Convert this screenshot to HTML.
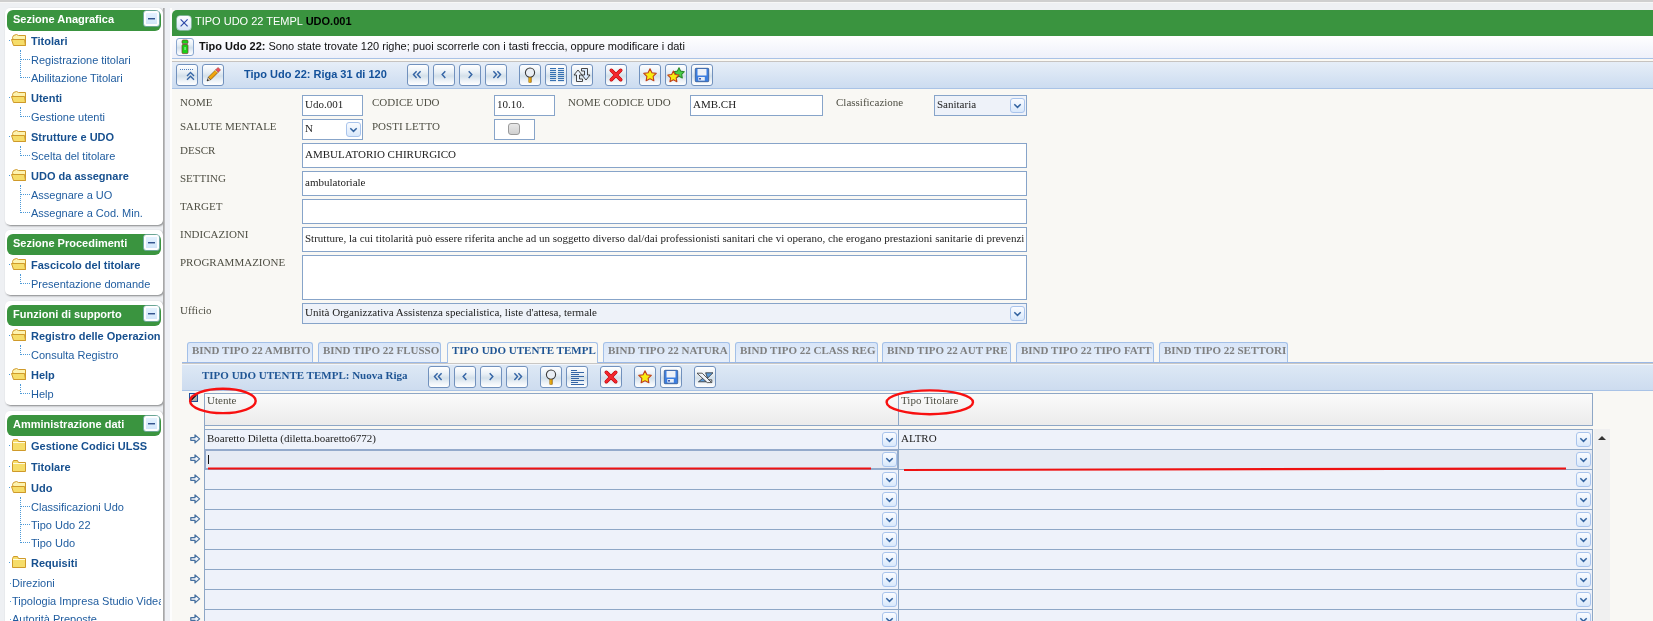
<!DOCTYPE html><html><head><meta charset="utf-8"><style>
*{margin:0;padding:0;box-sizing:border-box}
html,body{width:1653px;height:621px;overflow:hidden}
body{position:relative;background:#eef0f3;font-family:"Liberation Sans",sans-serif;font-size:11px}
.abs{position:absolute}
.topbar{left:0;top:0;width:1653px;height:2px;background:#cfcfcf}
.topw{left:0;top:2px;width:1653px;height:1px;background:#f7f7f7}
.pnl{position:absolute;left:5px;width:158px;background:#fff;border-radius:5px;box-shadow:1px 1px 2px rgba(0,0,0,.45)}
.ph{position:absolute;left:7px;width:154px;height:21px;background:#3a943f;border-radius:6px;color:#fff;font-weight:bold;font-size:11px}
.ph span{position:absolute;left:6px;top:3px;line-height:13px}
.mb{position:absolute;left:137px;top:1px;width:15px;height:15px;border-radius:2px;background:linear-gradient(#e4f2ff,#d2e6fa);border:2px solid #fdfdff;box-shadow:0 0 0 .6px #9ab8e8}
.mb:after{content:"";position:absolute;left:2px;top:5px;width:7px;height:1px;background:#33548f;box-shadow:0 1px 0 rgba(51,84,143,.45)}
.it{position:absolute;white-space:nowrap;color:#1f5c9f;line-height:13px}
.itb{position:absolute;white-space:nowrap;color:#17508f;font-weight:bold;line-height:13px}
.fo{position:absolute}
.vd{position:absolute;border-left:1px dotted #4d9ad8;width:0}
.hd{position:absolute;border-top:1px dotted #4d9ad8;height:0}
.dot{position:absolute;width:1px;height:1px;background:#4d9ad8}
</style></head><body><div style="position:absolute;left:0;top:0;width:1653px;height:621px;overflow:hidden;will-change:transform">
<div class="abs topbar"></div><div class="abs topw"></div>
<div style="position:absolute;left:0;top:0;width:163px;height:621px;overflow:hidden">
<div class="pnl" style="top:8px;height:217px"></div>
<div class="ph" style="top:10px"><span>Sezione Anagrafica</span><div class="mb"></div></div>
<div class="fo" style="left:11px;top:34px"><svg width="16" height="13" viewBox="0 0 16 13"><path d="M1.5 3.5 L2.5 1.5 L5.5 0.5 L7.5 1.5 L14.5 1.5 L14.5 11.5 L3.5 11.5 Z" fill="#fdf3b0" stroke="#cf9a2a" stroke-width="1"/><path d="M0.5 5.5 L13.5 5.5 L14.5 11.5 L2.5 11.5 Z" fill="#f6dd6a" stroke="#cf9a2a" stroke-width="1"/></svg></div>
<div class="dot" style="left:9px;top:40px"></div>
<div class="itb" style="left:31px;top:35px">Titolari</div>
<div class="it" style="left:31px;top:54px">Registrazione titolari</div>
<div class="hd" style="left:21px;top:59px;width:9px"></div>
<div class="vd" style="left:20px;top:50px;height:10px"></div>
<div class="it" style="left:31px;top:72px">Abilitazione Titolari</div>
<div class="hd" style="left:21px;top:77px;width:9px"></div>
<div class="vd" style="left:20px;top:50px;height:28px"></div>
<div class="fo" style="left:11px;top:91px"><svg width="16" height="13" viewBox="0 0 16 13"><path d="M1.5 3.5 L2.5 1.5 L5.5 0.5 L7.5 1.5 L14.5 1.5 L14.5 11.5 L3.5 11.5 Z" fill="#fdf3b0" stroke="#cf9a2a" stroke-width="1"/><path d="M0.5 5.5 L13.5 5.5 L14.5 11.5 L2.5 11.5 Z" fill="#f6dd6a" stroke="#cf9a2a" stroke-width="1"/></svg></div>
<div class="dot" style="left:9px;top:97px"></div>
<div class="itb" style="left:31px;top:92px">Utenti</div>
<div class="it" style="left:31px;top:111px">Gestione utenti</div>
<div class="hd" style="left:21px;top:116px;width:9px"></div>
<div class="vd" style="left:20px;top:107px;height:10px"></div>
<div class="fo" style="left:11px;top:130px"><svg width="16" height="13" viewBox="0 0 16 13"><path d="M1.5 3.5 L2.5 1.5 L5.5 0.5 L7.5 1.5 L14.5 1.5 L14.5 11.5 L3.5 11.5 Z" fill="#fdf3b0" stroke="#cf9a2a" stroke-width="1"/><path d="M0.5 5.5 L13.5 5.5 L14.5 11.5 L2.5 11.5 Z" fill="#f6dd6a" stroke="#cf9a2a" stroke-width="1"/></svg></div>
<div class="dot" style="left:9px;top:136px"></div>
<div class="itb" style="left:31px;top:131px">Strutture e UDO</div>
<div class="it" style="left:31px;top:150px">Scelta del titolare</div>
<div class="hd" style="left:21px;top:155px;width:9px"></div>
<div class="vd" style="left:20px;top:146px;height:10px"></div>
<div class="fo" style="left:11px;top:169px"><svg width="16" height="13" viewBox="0 0 16 13"><path d="M1.5 3.5 L2.5 1.5 L5.5 0.5 L7.5 1.5 L14.5 1.5 L14.5 11.5 L3.5 11.5 Z" fill="#fdf3b0" stroke="#cf9a2a" stroke-width="1"/><path d="M0.5 5.5 L13.5 5.5 L14.5 11.5 L2.5 11.5 Z" fill="#f6dd6a" stroke="#cf9a2a" stroke-width="1"/></svg></div>
<div class="dot" style="left:9px;top:175px"></div>
<div class="itb" style="left:31px;top:170px">UDO da assegnare</div>
<div class="it" style="left:31px;top:189px">Assegnare a UO</div>
<div class="hd" style="left:21px;top:194px;width:9px"></div>
<div class="vd" style="left:20px;top:185px;height:10px"></div>
<div class="it" style="left:31px;top:207px">Assegnare a Cod. Min.</div>
<div class="hd" style="left:21px;top:212px;width:9px"></div>
<div class="vd" style="left:20px;top:185px;height:28px"></div>
<div class="pnl" style="top:230px;height:65px"></div>
<div class="ph" style="top:234px"><span>Sezione Procedimenti</span><div class="mb"></div></div>
<div class="fo" style="left:11px;top:258px"><svg width="16" height="13" viewBox="0 0 16 13"><path d="M1.5 3.5 L2.5 1.5 L5.5 0.5 L7.5 1.5 L14.5 1.5 L14.5 11.5 L3.5 11.5 Z" fill="#fdf3b0" stroke="#cf9a2a" stroke-width="1"/><path d="M0.5 5.5 L13.5 5.5 L14.5 11.5 L2.5 11.5 Z" fill="#f6dd6a" stroke="#cf9a2a" stroke-width="1"/></svg></div>
<div class="dot" style="left:9px;top:264px"></div>
<div class="itb" style="left:31px;top:259px">Fascicolo del titolare</div>
<div class="it" style="left:31px;top:278px">Presentazione domande</div>
<div class="hd" style="left:21px;top:283px;width:9px"></div>
<div class="vd" style="left:20px;top:274px;height:10px"></div>
<div class="pnl" style="top:301px;height:104px"></div>
<div class="ph" style="top:305px"><span>Funzioni di supporto</span><div class="mb"></div></div>
<div class="fo" style="left:11px;top:329px"><svg width="16" height="13" viewBox="0 0 16 13"><path d="M1.5 3.5 L2.5 1.5 L5.5 0.5 L7.5 1.5 L14.5 1.5 L14.5 11.5 L3.5 11.5 Z" fill="#fdf3b0" stroke="#cf9a2a" stroke-width="1"/><path d="M0.5 5.5 L13.5 5.5 L14.5 11.5 L2.5 11.5 Z" fill="#f6dd6a" stroke="#cf9a2a" stroke-width="1"/></svg></div>
<div class="dot" style="left:9px;top:335px"></div>
<div class="itb" style="left:31px;top:330px"><span style="display:inline-block;width:130px;overflow:hidden;vertical-align:top">Registro delle Operazioni</span></div>
<div class="it" style="left:31px;top:349px">Consulta Registro</div>
<div class="hd" style="left:21px;top:354px;width:9px"></div>
<div class="vd" style="left:20px;top:345px;height:10px"></div>
<div class="fo" style="left:11px;top:368px"><svg width="16" height="13" viewBox="0 0 16 13"><path d="M1.5 3.5 L2.5 1.5 L5.5 0.5 L7.5 1.5 L14.5 1.5 L14.5 11.5 L3.5 11.5 Z" fill="#fdf3b0" stroke="#cf9a2a" stroke-width="1"/><path d="M0.5 5.5 L13.5 5.5 L14.5 11.5 L2.5 11.5 Z" fill="#f6dd6a" stroke="#cf9a2a" stroke-width="1"/></svg></div>
<div class="dot" style="left:9px;top:374px"></div>
<div class="itb" style="left:31px;top:369px">Help</div>
<div class="it" style="left:31px;top:388px">Help</div>
<div class="hd" style="left:21px;top:393px;width:9px"></div>
<div class="vd" style="left:20px;top:384px;height:10px"></div>
<div class="pnl" style="top:411px;height:229px"></div>
<div class="ph" style="top:415px"><span>Amministrazione dati</span><div class="mb"></div></div>
<div class="fo" style="left:11px;top:439px"><svg width="16" height="13" viewBox="0 0 16 13"><path d="M1.5 2.5 L2.5 0.5 L6.5 0.5 L7.5 2.5 L14.5 2.5 L14.5 11.5 L1.5 11.5 Z" fill="#f6dd6a" stroke="#cf9a2a" stroke-width="1"/><path d="M2 3.5 L14 3.5" stroke="#fffbe0" stroke-width="1"/></svg></div>
<div class="dot" style="left:9px;top:445px"></div>
<div class="itb" style="left:31px;top:440px">Gestione Codici ULSS</div>
<div class="fo" style="left:11px;top:460px"><svg width="16" height="13" viewBox="0 0 16 13"><path d="M1.5 2.5 L2.5 0.5 L6.5 0.5 L7.5 2.5 L14.5 2.5 L14.5 11.5 L1.5 11.5 Z" fill="#f6dd6a" stroke="#cf9a2a" stroke-width="1"/><path d="M2 3.5 L14 3.5" stroke="#fffbe0" stroke-width="1"/></svg></div>
<div class="dot" style="left:9px;top:466px"></div>
<div class="itb" style="left:31px;top:461px">Titolare</div>
<div class="fo" style="left:11px;top:481px"><svg width="16" height="13" viewBox="0 0 16 13"><path d="M1.5 3.5 L2.5 1.5 L5.5 0.5 L7.5 1.5 L14.5 1.5 L14.5 11.5 L3.5 11.5 Z" fill="#fdf3b0" stroke="#cf9a2a" stroke-width="1"/><path d="M0.5 5.5 L13.5 5.5 L14.5 11.5 L2.5 11.5 Z" fill="#f6dd6a" stroke="#cf9a2a" stroke-width="1"/></svg></div>
<div class="dot" style="left:9px;top:487px"></div>
<div class="itb" style="left:31px;top:482px">Udo</div>
<div class="it" style="left:31px;top:501px">Classificazioni Udo</div>
<div class="hd" style="left:21px;top:506px;width:9px"></div>
<div class="vd" style="left:20px;top:497px;height:10px"></div>
<div class="it" style="left:31px;top:519px">Tipo Udo 22</div>
<div class="hd" style="left:21px;top:524px;width:9px"></div>
<div class="vd" style="left:20px;top:497px;height:28px"></div>
<div class="it" style="left:31px;top:537px">Tipo Udo</div>
<div class="hd" style="left:21px;top:542px;width:9px"></div>
<div class="vd" style="left:20px;top:497px;height:46px"></div>
<div class="fo" style="left:11px;top:556px"><svg width="16" height="13" viewBox="0 0 16 13"><path d="M1.5 2.5 L2.5 0.5 L6.5 0.5 L7.5 2.5 L14.5 2.5 L14.5 11.5 L1.5 11.5 Z" fill="#f6dd6a" stroke="#cf9a2a" stroke-width="1"/><path d="M2 3.5 L14 3.5" stroke="#fffbe0" stroke-width="1"/></svg></div>
<div class="dot" style="left:9px;top:562px"></div>
<div class="itb" style="left:31px;top:557px">Requisiti</div>
<div class="it" style="left:12px;top:577px">Direzioni</div>
<div class="dot" style="left:10px;top:583px"></div>
<div class="it" style="left:12px;top:595px"><span style="display:inline-block;width:149px;overflow:hidden;vertical-align:top">Tipologia Impresa Studio Videat</span></div>
<div class="dot" style="left:10px;top:601px"></div>
<div class="it" style="left:12px;top:613px">Autorità Preposte</div>
<div class="dot" style="left:10px;top:619px"></div>
</div>

<style>
.mp{position:absolute;left:172px;top:10px;width:1481px;height:611px;background:#f9f8f4}
.gh{position:absolute;left:172px;top:10px;width:1481px;height:26px;background:#3a943f;border-top-left-radius:5px}
.ghs{position:absolute;left:195px;top:15px;color:#fff;line-height:13px;white-space:nowrap}
.ghs b{color:#000}
.xb{position:absolute;left:176.5px;top:15.5px;width:14px;height:14px;border-radius:3px;background:linear-gradient(#fdfdff,#e6eefa 60%,#d8e4f6);box-shadow:0 0 0 .5px #c8d8f0}
.info{position:absolute;left:172px;top:36px;width:1481px;height:22px;background:linear-gradient(#ffffff,#eef0fa)}
.infol{position:absolute;left:172px;top:58px;width:1481px;height:1px;background:#a9c2e6}
.infol2{position:absolute;left:172px;top:59px;width:1481px;height:2px;background:#fbf9f3}
.tbl{position:absolute;left:172px;top:61px;width:1481px;height:1px;background:#c6c3c0}
.tb{position:absolute;left:172px;top:62px;width:1481px;height:26px;background:linear-gradient(#e6eef8,#ccdcf0)}
.tbb{position:absolute;left:172px;top:88px;width:1481px;height:1px;background:#a9c3e6}
.btn{position:absolute;width:22px;height:22px;border:1px solid #7191bd;border-radius:3px;background:linear-gradient(#ffffff 0%,#e9f0f6 35%,#d3e0ea 55%,#eef3f8 80%,#ffffff 100%)}
.btn svg{position:absolute;left:0;top:0}
.ttl{position:absolute;color:#13519a;font-weight:bold;white-space:nowrap;line-height:13px}
.lbl{position:absolute;font-family:"Liberation Serif",serif;color:#4f4f44;white-space:nowrap;line-height:13px}
.inp{position:absolute;background:#fff;border:1px solid #87a4c9;font-family:"Liberation Serif",serif;color:#222;white-space:nowrap;overflow:hidden;line-height:13px}
.inp span{position:absolute;left:2px;right:2px;overflow:hidden}
.sel{background:#eef2f9}
.dd{position:absolute;width:15px;height:15px;border:1px solid #a9c4ec;border-radius:3px;background:linear-gradient(#fafcff,#d9e8fb)}
.dd svg{position:absolute;left:0;top:0}
</style>

<div class="abs" style="left:163px;top:8px;width:2px;height:613px;background:linear-gradient(90deg,#9c9c9c,#c9c9cc)"></div>
<div class="abs" style="left:165px;top:8px;width:5px;height:613px;background:#eef0f5"></div>
<div class="abs" style="left:170px;top:8px;width:2px;height:613px;background:#fdfdfd"></div>
<div class="mp"></div>
<div class="gh"></div>
<div class="xb"><svg width="14" height="14" viewBox="0 0 14 14"><path d="M3.6 3.4 L10.6 10.4 M10.6 3.4 L3.6 10.4" stroke="#2c48a8" stroke-width="1.15"/></svg></div>
<div class="ghs">TIPO UDO 22 TEMPL <b>UDO.001</b></div>
<div class="info"></div><div class="infol"></div><div class="infol2"></div><div class="tbl"></div>
<div class="btn" style="left:176px;top:38px;width:18px;height:18px;border-color:#8aa7cf"><svg width="16" height="16" viewBox="0 0 16 16"><rect x="5" y="1" width="6" height="3.6" rx="1.2" fill="#18d018" stroke="#7a3a2a" stroke-width=".7"/><rect x="5.4" y="4.6" width="5.2" height="1" fill="#8a7a70"/><rect x="5" y="5.6" width="6" height="9" rx="1" fill="#18d018" stroke="#7a3a2a" stroke-width=".7"/><rect x="7.6" y="8" width=".9" height="3" fill="#c8f8c8"/></svg></div>
<div class="abs" style="left:199px;top:40px;color:#111;line-height:13px;white-space:nowrap"><b>Tipo Udo 22:</b> Sono state trovate 120 righe; puoi scorrerle con i tasti freccia, oppure modificare i dati</div>
<div class="tb"></div><div class="tbb"></div>
<div class="btn" style="left:176px;top:64px;width:22px;height:22px"><svg width="20" height="20" viewBox="0 0 20 20"><rect x="3" y="4" width="1" height="1" fill="#4f7fbf"/><rect x="5" y="4" width="1" height="1" fill="#4f7fbf"/><rect x="7" y="4" width="1" height="1" fill="#4f7fbf"/><rect x="9" y="4" width="1" height="1" fill="#4f7fbf"/><rect x="11" y="4" width="1" height="1" fill="#4f7fbf"/><rect x="13" y="4" width="1" height="1" fill="#4f7fbf"/><rect x="15" y="4" width="1" height="1" fill="#4f7fbf"/><path d="M10 11 L13.5 7.5 L17 11 M10 14.8 L13.5 11.3 L17 14.8" fill="none" stroke="#3565a5" stroke-width="1.35"/></svg></div>
<div class="btn" style="left:202px;top:64px;width:22px;height:22px"><svg width="20" height="20" viewBox="0 0 20 20"><defs><linearGradient id="pg" x1="0" y1="0" x2="1" y2="1"><stop offset="0" stop-color="#ffd21a"/><stop offset="1" stop-color="#e07800"/></linearGradient></defs><path d="M5.26 12.26 L12.76 4.76 L15.24 7.24 L7.74 14.74 Z" fill="url(#pg)" stroke="#6a3a00" stroke-width=".6"/><path d="M12.76 4.76 L15.06 2.46 L17.54 4.94 L15.24 7.24 Z" fill="#f0505a" stroke="#8a2a2a" stroke-width=".5"/><path d="M12.4 5.1 L14.9 7.6" stroke="#ddd" stroke-width=".9"/><path d="M5.26 12.26 L7.74 14.74 L4 16 Z" fill="#f0d8b0" stroke="#333" stroke-width=".5"/><path d="M4 16 L4.7 14.1 L5.9 15.3 Z" fill="#111"/></svg></div>
<div class="ttl" style="left:244px;top:68px">Tipo Udo 22: Riga 31 di 120</div>
<div class="btn" style="left:407px;top:64px;width:22px;height:22px"><svg width="20" height="20" viewBox="0 0 20 20"><path d="M8.6 6.3 L5.5 9.6 L8.6 12.9 M12.6 6.3 L9.5 9.6 L12.6 12.9" fill="none" stroke="#3565a5" stroke-width="1.45"/></svg></div>
<div class="btn" style="left:433px;top:64px;width:22px;height:22px"><svg width="20" height="20" viewBox="0 0 20 20"><path d="M11.3 6.3 L8.2 9.6 L11.3 12.9" fill="none" stroke="#3565a5" stroke-width="1.45"/></svg></div>
<div class="btn" style="left:459px;top:64px;width:22px;height:22px"><svg width="20" height="20" viewBox="0 0 20 20"><path d="M8.7 6.3 L11.8 9.6 L8.7 12.9" fill="none" stroke="#3565a5" stroke-width="1.45"/></svg></div>
<div class="btn" style="left:485px;top:64px;width:22px;height:22px"><svg width="20" height="20" viewBox="0 0 20 20"><path d="M7.4 6.3 L10.5 9.6 L7.4 12.9 M11.4 6.3 L14.5 9.6 L11.4 12.9" fill="none" stroke="#3565a5" stroke-width="1.45"/></svg></div>
<div class="btn" style="left:519px;top:64px;width:22px;height:22px"><svg width="20" height="20" viewBox="0 0 20 20"><defs><linearGradient id="hg" x1="0" x2="1"><stop offset="0" stop-color="#f7c21a"/><stop offset="1" stop-color="#c98400"/></linearGradient></defs><circle cx="10" cy="7.6" r="4.6" fill="#e9eef4" stroke="#3a3a3a" stroke-width="1.1"/><rect x="8.8" y="12.4" width="2.5" height="5" fill="url(#hg)" stroke="#8a5a00" stroke-width=".5"/></svg></div>
<div class="btn" style="left:545px;top:64px;width:22px;height:22px"><svg width="20" height="20" viewBox="0 0 20 20"><rect x="4" y="3" width="6" height="1.1" fill="#3570b2"/><rect x="12" y="3" width="6" height="1.1" fill="#3570b2"/><rect x="4" y="5" width="6" height="1.1" fill="#3570b2"/><rect x="12" y="5" width="6" height="1.1" fill="#3570b2"/><rect x="4" y="7" width="6" height="1.1" fill="#3570b2"/><rect x="12" y="7" width="6" height="1.1" fill="#3570b2"/><rect x="4" y="9" width="6" height="1.1" fill="#3570b2"/><rect x="12" y="9" width="6" height="1.1" fill="#3570b2"/><rect x="4" y="11" width="6" height="1.1" fill="#3570b2"/><rect x="12" y="11" width="6" height="1.1" fill="#3570b2"/><rect x="4" y="13" width="6" height="1.1" fill="#3570b2"/><rect x="12" y="13" width="6" height="1.1" fill="#3570b2"/><rect x="4" y="15" width="6" height="1.1" fill="#3570b2"/><rect x="12" y="15" width="6" height="1.1" fill="#3570b2"/></svg></div>
<div class="btn" style="left:571px;top:64px;width:22px;height:22px"><svg width="20" height="20" viewBox="0 0 20 20"><path d="M2 10 L6 5 L10 10 L7.5 10 L7.5 14 L10.5 14 L10.5 16.5 L4.5 16.5 L4.5 10 Z" fill="#eef6ff" stroke="#333" stroke-width=".9" stroke-linejoin="round"/><path d="M18 10 L14 15 L10 10 L12.5 10 L12.5 6 L9.5 6 L9.5 3.5 L15.5 3.5 L15.5 10 Z" fill="#dcecff" stroke="#333" stroke-width=".9" stroke-linejoin="round"/></svg></div>
<div class="btn" style="left:605px;top:64px;width:22px;height:22px"><svg width="20" height="20" viewBox="0 0 20 20"><path d="M5.3 5.3 L14.7 14.7 M14.7 5.3 L5.3 14.7" stroke="#b80000" stroke-width="3.6" stroke-linecap="round"/><path d="M5.3 5.3 L14.7 14.7 M14.7 5.3 L5.3 14.7" stroke="#f3262e" stroke-width="2.6" stroke-linecap="round"/></svg></div>
<div class="btn" style="left:639px;top:64px;width:22px;height:22px"><svg width="20" height="20" viewBox="0 0 20 20"><polygon points="10.00,3.80 11.94,7.73 16.28,8.36 13.14,11.42 13.88,15.74 10.00,13.70 6.12,15.74 6.86,11.42 3.72,8.36 8.06,7.73" fill="#f8ec10" stroke="#c0401a" stroke-width="1.1" stroke-linejoin="round"/></svg></div>
<div class="btn" style="left:665px;top:64px;width:22px;height:22px"><svg width="20" height="20" viewBox="0 0 20 20"><polygon points="13.00,2.80 14.65,6.13 18.33,6.67 15.66,9.27 16.29,12.93 13.00,11.20 9.71,12.93 10.34,9.27 7.67,6.67 11.35,6.13" fill="#46d046" stroke="#2a8a2a" stroke-width="1.1" stroke-linejoin="round"/><polygon points="7.40,6.00 9.13,9.51 13.01,10.08 10.21,12.81 10.87,16.67 7.40,14.85 3.93,16.67 4.59,12.81 1.79,10.08 5.67,9.51" fill="#f8ec10" stroke="#c0401a" stroke-width="1.1" stroke-linejoin="round"/></svg></div>
<div class="btn" style="left:691px;top:64px;width:22px;height:22px"><svg width="20" height="20" viewBox="0 0 20 20"><rect x="3.3" y="3.3" width="13.4" height="13.4" rx=".8" fill="#3c7ee0" stroke="#2a4d85" stroke-width=".7"/><rect x="5.5" y="4" width="9" height="6.5" fill="#eef2f8"/><rect x="6.3" y="12" width="6.5" height="3.6" fill="#e8eef6"/><rect x="7.2" y="13" width="1.6" height="1.6" fill="#1a3aa0"/></svg></div>
<div class="lbl" style="left:180px;top:96px">NOME</div>
<div class="inp " style="left:302px;top:95px;width:61px;height:21px"><span style="top:2px">Udo.001</span></div>
<div class="lbl" style="left:372px;top:96px">CODICE UDO</div>
<div class="inp " style="left:494px;top:95px;width:61px;height:21px"><span style="top:2px">10.10.</span></div>
<div class="lbl" style="left:568px;top:96px">NOME CODICE UDO</div>
<div class="inp " style="left:690px;top:95px;width:133px;height:21px"><span style="top:2px">AMB.CH</span></div>
<div class="lbl" style="left:836px;top:96px">Classificazione</div>
<div class="inp sel" style="left:934px;top:95px;width:93px;height:21px"><span style="top:2px">Sanitaria</span></div>
<div class="dd" style="left:1010px;top:98px"><svg width="13" height="13" viewBox="0 0 13 13"><path d="M3.3 5.3 L6.5 8.4 L9.7 5.3" fill="none" stroke="#3363a0" stroke-width="1.5"/></svg></div>
<div class="lbl" style="left:180px;top:120px">SALUTE MENTALE</div>
<div class="inp " style="left:302px;top:119px;width:61px;height:21px"><span style="top:2px">N</span></div>
<div class="dd" style="left:346px;top:122px"><svg width="13" height="13" viewBox="0 0 13 13"><path d="M3.3 5.3 L6.5 8.4 L9.7 5.3" fill="none" stroke="#3363a0" stroke-width="1.5"/></svg></div>
<div class="lbl" style="left:372px;top:120px">POSTI LETTO</div>
<div class="inp " style="left:494px;top:119px;width:41px;height:21px"></div>
<div class="abs" style="left:508px;top:123px;width:12px;height:12px;border:1px solid #9a9a9a;border-radius:3px;background:linear-gradient(#e8e8e8,#d0d0d0)"></div>
<div class="lbl" style="left:180px;top:144px">DESCR</div>
<div class="inp " style="left:302px;top:143px;width:725px;height:25px"><span style="top:4px">AMBULATORIO CHIRURGICO</span></div>
<div class="lbl" style="left:180px;top:172px">SETTING</div>
<div class="inp " style="left:302px;top:171px;width:725px;height:25px"><span style="top:4px">ambulatoriale</span></div>
<div class="lbl" style="left:180px;top:200px">TARGET</div>
<div class="inp " style="left:302px;top:199px;width:725px;height:25px"></div>
<div class="lbl" style="left:180px;top:228px">INDICAZIONI</div>
<div class="inp " style="left:302px;top:227px;width:725px;height:25px"><span style="top:4px">Strutture, la cui titolarità può essere riferita anche ad un soggetto diverso dal/dai professionisti sanitari che vi operano, che erogano prestazioni sanitarie di prevenzione</span></div>
<div class="lbl" style="left:180px;top:256px">PROGRAMMAZIONE</div>
<div class="inp " style="left:302px;top:255px;width:725px;height:45px"></div>
<div class="lbl" style="left:180px;top:304px">Ufficio</div>
<div class="inp sel" style="left:302px;top:303px;width:725px;height:21px"><span style="top:2px">Unità Organizzativa Assistenza specialistica, liste d'attesa, termale</span></div>
<div class="dd" style="left:1010px;top:306px"><svg width="13" height="13" viewBox="0 0 13 13"><path d="M3.3 5.3 L6.5 8.4 L9.7 5.3" fill="none" stroke="#3363a0" stroke-width="1.5"/></svg></div>

<style>
.tab{position:absolute;top:342px;height:21px;border:1px solid #a3c0e8;border-bottom:none;border-radius:3px 3px 0 0;background:linear-gradient(#d9e6f8,#e6eefa);font-family:"Liberation Serif",serif;font-weight:bold;color:#7f7f7f;white-space:nowrap;overflow:hidden;line-height:13px}
.tab span{position:absolute;left:4px;top:1px}
.tab.act{background:#f9f8f4;color:#1f5594}
.stb{position:absolute;left:182px;top:363px;width:1471px;height:27px;background:linear-gradient(#c9c7c4 0,#c9c7c4 1px,#f0f5fc 1px,#f0f5fc 2px,#dde8f5 2px,#cddcef 100%)}
.grid{position:absolute}
.gcell{position:absolute;border:1px solid #8ea7c6;background:#eef2fa}
.arrow{position:absolute}
</style>

<div class="abs" style="left:182px;top:362px;width:265px;height:1px;background:#9ab8e6"></div>
<div class="abs" style="left:598px;top:362px;width:1055px;height:1px;background:#9ab8e6"></div>
<div class="tab" style="left:187px;width:126px;height:20px"><span>BIND TIPO 22 AMBITO</span></div>
<div class="tab" style="left:318px;width:123px;height:20px"><span>BIND TIPO 22 FLUSSO</span></div>
<div class="tab act" style="left:447px;width:151px;height:21px"><span>TIPO UDO UTENTE TEMPL</span></div>
<div class="tab" style="left:603px;width:127px;height:20px"><span>BIND TIPO 22 NATURA</span></div>
<div class="tab" style="left:735px;width:143px;height:20px"><span>BIND TIPO 22 CLASS REG</span></div>
<div class="tab" style="left:882px;width:129px;height:20px"><span>BIND TIPO 22 AUT PRE</span></div>
<div class="tab" style="left:1016px;width:138px;height:20px"><span>BIND TIPO 22 TIPO FATT</span></div>
<div class="tab" style="left:1159px;width:129px;height:20px"><span>BIND TIPO 22 SETTORI</span></div>
<div class="stb"></div>
<div class="abs" style="left:182px;top:390px;width:1471px;height:1px;background:#a9c3e6"></div>
<div class="abs" style="left:202px;top:369px;color:#1f5594;font-family:'Liberation Serif',serif;font-weight:bold;line-height:13px;white-space:nowrap">TIPO UDO UTENTE TEMPL: Nuova Riga</div>
<div class="btn" style="left:428px;top:366px;width:22px;height:22px"><svg width="20" height="20" viewBox="0 0 20 20"><path d="M8.6 6.3 L5.5 9.6 L8.6 12.9 M12.6 6.3 L9.5 9.6 L12.6 12.9" fill="none" stroke="#3565a5" stroke-width="1.45"/></svg></div>
<div class="btn" style="left:454px;top:366px;width:22px;height:22px"><svg width="20" height="20" viewBox="0 0 20 20"><path d="M11.3 6.3 L8.2 9.6 L11.3 12.9" fill="none" stroke="#3565a5" stroke-width="1.45"/></svg></div>
<div class="btn" style="left:480px;top:366px;width:22px;height:22px"><svg width="20" height="20" viewBox="0 0 20 20"><path d="M8.7 6.3 L11.8 9.6 L8.7 12.9" fill="none" stroke="#3565a5" stroke-width="1.45"/></svg></div>
<div class="btn" style="left:506px;top:366px;width:22px;height:22px"><svg width="20" height="20" viewBox="0 0 20 20"><path d="M7.4 6.3 L10.5 9.6 L7.4 12.9 M11.4 6.3 L14.5 9.6 L11.4 12.9" fill="none" stroke="#3565a5" stroke-width="1.45"/></svg></div>
<div class="btn" style="left:540px;top:366px;width:22px;height:22px"><svg width="20" height="20" viewBox="0 0 20 20"><defs><linearGradient id="hg" x1="0" x2="1"><stop offset="0" stop-color="#f7c21a"/><stop offset="1" stop-color="#c98400"/></linearGradient></defs><circle cx="10" cy="7.6" r="4.6" fill="#e9eef4" stroke="#3a3a3a" stroke-width="1.1"/><rect x="8.8" y="12.4" width="2.5" height="5" fill="url(#hg)" stroke="#8a5a00" stroke-width=".5"/></svg></div>
<div class="btn" style="left:566px;top:366px;width:22px;height:22px"><svg width="20" height="20" viewBox="0 0 20 20"><rect x="4" y="3" width="6" height="1" fill="#3565a5"/><rect x="4" y="5" width="13" height="1" fill="#3565a5"/><rect x="4" y="7" width="8" height="1" fill="#3565a5"/><rect x="4" y="9" width="13" height="1" fill="#3565a5"/><rect x="4" y="11" width="8" height="1" fill="#3565a5"/><rect x="4" y="13" width="13" height="1" fill="#3565a5"/><rect x="4" y="15" width="7" height="1" fill="#3565a5"/><rect x="4" y="17" width="13" height="1" fill="#3565a5"/></svg></div>
<div class="btn" style="left:600px;top:366px;width:22px;height:22px"><svg width="20" height="20" viewBox="0 0 20 20"><path d="M5.3 5.3 L14.7 14.7 M14.7 5.3 L5.3 14.7" stroke="#b80000" stroke-width="3.6" stroke-linecap="round"/><path d="M5.3 5.3 L14.7 14.7 M14.7 5.3 L5.3 14.7" stroke="#f3262e" stroke-width="2.6" stroke-linecap="round"/></svg></div>
<div class="btn" style="left:634px;top:366px;width:22px;height:22px"><svg width="20" height="20" viewBox="0 0 20 20"><polygon points="10.00,3.80 11.94,7.73 16.28,8.36 13.14,11.42 13.88,15.74 10.00,13.70 6.12,15.74 6.86,11.42 3.72,8.36 8.06,7.73" fill="#f8ec10" stroke="#c0401a" stroke-width="1.1" stroke-linejoin="round"/></svg></div>
<div class="btn" style="left:660px;top:366px;width:22px;height:22px"><svg width="20" height="20" viewBox="0 0 20 20"><rect x="3.3" y="3.3" width="13.4" height="13.4" rx=".8" fill="#3c7ee0" stroke="#2a4d85" stroke-width=".7"/><rect x="5.5" y="4" width="9" height="6.5" fill="#eef2f8"/><rect x="6.3" y="12" width="6.5" height="3.6" fill="#e8eef6"/><rect x="7.2" y="13" width="1.6" height="1.6" fill="#1a3aa0"/></svg></div>
<div class="btn" style="left:694px;top:366px;width:22px;height:22px"><svg width="20" height="20" viewBox="0 0 20 20"><path d="M10.6 5.8 L18 5.8 L12.6 11.2 Z" fill="#5b9ad8" stroke="#333" stroke-width=".8" stroke-linejoin="round"/><path d="M3.4 14.8 L11.4 14.8 L8.4 10.8 Z" fill="#5b9ad8" stroke="#333" stroke-width=".8" stroke-linejoin="round"/><path d="M2 6.2 L7.2 6.2 L16.6 15.6 L12.2 15.6 Z" fill="#eef3fa" stroke="#333" stroke-width=".8" stroke-linejoin="round"/><path d="M13.5 12.8 L16.8 12.8 L16.8 15.6" fill="none" stroke="#333" stroke-width=".8"/></svg></div>
<div class="abs" style="left:204px;top:393px;width:1389px;height:33px;border:1px solid #8ea7c6;background:linear-gradient(#fbfbfb,#ebebeb)"></div>
<div class="abs" style="left:898px;top:394px;width:1px;height:31px;background:#8ea7c6"></div>
<div class="lbl" style="left:207px;top:394px;color:#4f4f44">Utente</div>
<div class="lbl" style="left:901px;top:394px;color:#4f4f44">Tipo Titolare</div>
<div class="abs" style="left:189px;top:393px;width:9px;height:9px;border:1px solid #1f4f9a;background:linear-gradient(135deg,#f4f4f4,#9a9a9a)"><svg width="7" height="7" viewBox="0 0 7 7" style="position:absolute;left:0;top:0"><path d="M1 6.2 L6.2 1" stroke="#111" stroke-width="1.7"/></svg></div>
<div class="abs" style="left:204px;top:425px;width:1px;height:5px;background:#8ea7c6"></div>
<div class="abs" style="left:204px;top:429px;width:1389px;height:21px;border:1px solid #8ea7c6;background:#eef2fa"></div>
<div class="abs" style="left:898px;top:429px;width:1px;height:21px;background:#8ea7c6"></div>
<div class="dd" style="left:882px;top:432px;width:15px;height:15px"><svg width="13" height="13" viewBox="0 0 13 13"><path d="M3.3 5.3 L6.5 8.4 L9.7 5.3" fill="none" stroke="#3363a0" stroke-width="1.5"/></svg></div>
<div class="dd" style="left:1576px;top:432px;width:15px;height:15px"><svg width="13" height="13" viewBox="0 0 13 13"><path d="M3.3 5.3 L6.5 8.4 L9.7 5.3" fill="none" stroke="#3363a0" stroke-width="1.5"/></svg></div>
<div class="arrow" style="left:190px;top:434px"><svg width="11" height="10" viewBox="0 0 11 10"><path d="M0.8 3.6 H5 V0.9 L9.6 4.9 L5 8.9 V6.3 H0.8 Z" fill="#f2f5fa" stroke="#46709f" stroke-width="1.25" stroke-linejoin="round"/></svg></div>
<div class="abs" style="left:204px;top:449px;width:1389px;height:21px;border:1px solid #8ea7c6;background:#eef2fa"></div>
<div class="abs" style="left:898px;top:449px;width:1px;height:21px;background:#8ea7c6"></div>
<div class="dd" style="left:882px;top:452px;width:15px;height:15px"><svg width="13" height="13" viewBox="0 0 13 13"><path d="M3.3 5.3 L6.5 8.4 L9.7 5.3" fill="none" stroke="#3363a0" stroke-width="1.5"/></svg></div>
<div class="dd" style="left:1576px;top:452px;width:15px;height:15px"><svg width="13" height="13" viewBox="0 0 13 13"><path d="M3.3 5.3 L6.5 8.4 L9.7 5.3" fill="none" stroke="#3363a0" stroke-width="1.5"/></svg></div>
<div class="arrow" style="left:190px;top:454px"><svg width="11" height="10" viewBox="0 0 11 10"><path d="M0.8 3.6 H5 V0.9 L9.6 4.9 L5 8.9 V6.3 H0.8 Z" fill="#f2f5fa" stroke="#46709f" stroke-width="1.25" stroke-linejoin="round"/></svg></div>
<div class="abs" style="left:204px;top:469px;width:1389px;height:21px;border:1px solid #8ea7c6;background:#eef2fa"></div>
<div class="abs" style="left:898px;top:469px;width:1px;height:21px;background:#8ea7c6"></div>
<div class="dd" style="left:882px;top:472px;width:15px;height:15px"><svg width="13" height="13" viewBox="0 0 13 13"><path d="M3.3 5.3 L6.5 8.4 L9.7 5.3" fill="none" stroke="#3363a0" stroke-width="1.5"/></svg></div>
<div class="dd" style="left:1576px;top:472px;width:15px;height:15px"><svg width="13" height="13" viewBox="0 0 13 13"><path d="M3.3 5.3 L6.5 8.4 L9.7 5.3" fill="none" stroke="#3363a0" stroke-width="1.5"/></svg></div>
<div class="arrow" style="left:190px;top:474px"><svg width="11" height="10" viewBox="0 0 11 10"><path d="M0.8 3.6 H5 V0.9 L9.6 4.9 L5 8.9 V6.3 H0.8 Z" fill="#f2f5fa" stroke="#46709f" stroke-width="1.25" stroke-linejoin="round"/></svg></div>
<div class="abs" style="left:204px;top:489px;width:1389px;height:21px;border:1px solid #8ea7c6;background:#eef2fa"></div>
<div class="abs" style="left:898px;top:489px;width:1px;height:21px;background:#8ea7c6"></div>
<div class="dd" style="left:882px;top:492px;width:15px;height:15px"><svg width="13" height="13" viewBox="0 0 13 13"><path d="M3.3 5.3 L6.5 8.4 L9.7 5.3" fill="none" stroke="#3363a0" stroke-width="1.5"/></svg></div>
<div class="dd" style="left:1576px;top:492px;width:15px;height:15px"><svg width="13" height="13" viewBox="0 0 13 13"><path d="M3.3 5.3 L6.5 8.4 L9.7 5.3" fill="none" stroke="#3363a0" stroke-width="1.5"/></svg></div>
<div class="arrow" style="left:190px;top:494px"><svg width="11" height="10" viewBox="0 0 11 10"><path d="M0.8 3.6 H5 V0.9 L9.6 4.9 L5 8.9 V6.3 H0.8 Z" fill="#f2f5fa" stroke="#46709f" stroke-width="1.25" stroke-linejoin="round"/></svg></div>
<div class="abs" style="left:204px;top:509px;width:1389px;height:21px;border:1px solid #8ea7c6;background:#eef2fa"></div>
<div class="abs" style="left:898px;top:509px;width:1px;height:21px;background:#8ea7c6"></div>
<div class="dd" style="left:882px;top:512px;width:15px;height:15px"><svg width="13" height="13" viewBox="0 0 13 13"><path d="M3.3 5.3 L6.5 8.4 L9.7 5.3" fill="none" stroke="#3363a0" stroke-width="1.5"/></svg></div>
<div class="dd" style="left:1576px;top:512px;width:15px;height:15px"><svg width="13" height="13" viewBox="0 0 13 13"><path d="M3.3 5.3 L6.5 8.4 L9.7 5.3" fill="none" stroke="#3363a0" stroke-width="1.5"/></svg></div>
<div class="arrow" style="left:190px;top:514px"><svg width="11" height="10" viewBox="0 0 11 10"><path d="M0.8 3.6 H5 V0.9 L9.6 4.9 L5 8.9 V6.3 H0.8 Z" fill="#f2f5fa" stroke="#46709f" stroke-width="1.25" stroke-linejoin="round"/></svg></div>
<div class="abs" style="left:204px;top:529px;width:1389px;height:21px;border:1px solid #8ea7c6;background:#eef2fa"></div>
<div class="abs" style="left:898px;top:529px;width:1px;height:21px;background:#8ea7c6"></div>
<div class="dd" style="left:882px;top:532px;width:15px;height:15px"><svg width="13" height="13" viewBox="0 0 13 13"><path d="M3.3 5.3 L6.5 8.4 L9.7 5.3" fill="none" stroke="#3363a0" stroke-width="1.5"/></svg></div>
<div class="dd" style="left:1576px;top:532px;width:15px;height:15px"><svg width="13" height="13" viewBox="0 0 13 13"><path d="M3.3 5.3 L6.5 8.4 L9.7 5.3" fill="none" stroke="#3363a0" stroke-width="1.5"/></svg></div>
<div class="arrow" style="left:190px;top:534px"><svg width="11" height="10" viewBox="0 0 11 10"><path d="M0.8 3.6 H5 V0.9 L9.6 4.9 L5 8.9 V6.3 H0.8 Z" fill="#f2f5fa" stroke="#46709f" stroke-width="1.25" stroke-linejoin="round"/></svg></div>
<div class="abs" style="left:204px;top:549px;width:1389px;height:21px;border:1px solid #8ea7c6;background:#eef2fa"></div>
<div class="abs" style="left:898px;top:549px;width:1px;height:21px;background:#8ea7c6"></div>
<div class="dd" style="left:882px;top:552px;width:15px;height:15px"><svg width="13" height="13" viewBox="0 0 13 13"><path d="M3.3 5.3 L6.5 8.4 L9.7 5.3" fill="none" stroke="#3363a0" stroke-width="1.5"/></svg></div>
<div class="dd" style="left:1576px;top:552px;width:15px;height:15px"><svg width="13" height="13" viewBox="0 0 13 13"><path d="M3.3 5.3 L6.5 8.4 L9.7 5.3" fill="none" stroke="#3363a0" stroke-width="1.5"/></svg></div>
<div class="arrow" style="left:190px;top:554px"><svg width="11" height="10" viewBox="0 0 11 10"><path d="M0.8 3.6 H5 V0.9 L9.6 4.9 L5 8.9 V6.3 H0.8 Z" fill="#f2f5fa" stroke="#46709f" stroke-width="1.25" stroke-linejoin="round"/></svg></div>
<div class="abs" style="left:204px;top:569px;width:1389px;height:21px;border:1px solid #8ea7c6;background:#eef2fa"></div>
<div class="abs" style="left:898px;top:569px;width:1px;height:21px;background:#8ea7c6"></div>
<div class="dd" style="left:882px;top:572px;width:15px;height:15px"><svg width="13" height="13" viewBox="0 0 13 13"><path d="M3.3 5.3 L6.5 8.4 L9.7 5.3" fill="none" stroke="#3363a0" stroke-width="1.5"/></svg></div>
<div class="dd" style="left:1576px;top:572px;width:15px;height:15px"><svg width="13" height="13" viewBox="0 0 13 13"><path d="M3.3 5.3 L6.5 8.4 L9.7 5.3" fill="none" stroke="#3363a0" stroke-width="1.5"/></svg></div>
<div class="arrow" style="left:190px;top:574px"><svg width="11" height="10" viewBox="0 0 11 10"><path d="M0.8 3.6 H5 V0.9 L9.6 4.9 L5 8.9 V6.3 H0.8 Z" fill="#f2f5fa" stroke="#46709f" stroke-width="1.25" stroke-linejoin="round"/></svg></div>
<div class="abs" style="left:204px;top:589px;width:1389px;height:21px;border:1px solid #8ea7c6;background:#eef2fa"></div>
<div class="abs" style="left:898px;top:589px;width:1px;height:21px;background:#8ea7c6"></div>
<div class="dd" style="left:882px;top:592px;width:15px;height:15px"><svg width="13" height="13" viewBox="0 0 13 13"><path d="M3.3 5.3 L6.5 8.4 L9.7 5.3" fill="none" stroke="#3363a0" stroke-width="1.5"/></svg></div>
<div class="dd" style="left:1576px;top:592px;width:15px;height:15px"><svg width="13" height="13" viewBox="0 0 13 13"><path d="M3.3 5.3 L6.5 8.4 L9.7 5.3" fill="none" stroke="#3363a0" stroke-width="1.5"/></svg></div>
<div class="arrow" style="left:190px;top:594px"><svg width="11" height="10" viewBox="0 0 11 10"><path d="M0.8 3.6 H5 V0.9 L9.6 4.9 L5 8.9 V6.3 H0.8 Z" fill="#f2f5fa" stroke="#46709f" stroke-width="1.25" stroke-linejoin="round"/></svg></div>
<div class="abs" style="left:204px;top:609px;width:1389px;height:21px;border:1px solid #8ea7c6;background:#eef2fa"></div>
<div class="abs" style="left:898px;top:609px;width:1px;height:21px;background:#8ea7c6"></div>
<div class="dd" style="left:882px;top:612px;width:15px;height:15px"><svg width="13" height="13" viewBox="0 0 13 13"><path d="M3.3 5.3 L6.5 8.4 L9.7 5.3" fill="none" stroke="#3363a0" stroke-width="1.5"/></svg></div>
<div class="dd" style="left:1576px;top:612px;width:15px;height:15px"><svg width="13" height="13" viewBox="0 0 13 13"><path d="M3.3 5.3 L6.5 8.4 L9.7 5.3" fill="none" stroke="#3363a0" stroke-width="1.5"/></svg></div>
<div class="arrow" style="left:190px;top:614px"><svg width="11" height="10" viewBox="0 0 11 10"><path d="M0.8 3.6 H5 V0.9 L9.6 4.9 L5 8.9 V6.3 H0.8 Z" fill="#f2f5fa" stroke="#46709f" stroke-width="1.25" stroke-linejoin="round"/></svg></div>
<div class="abs" style="left:204px;top:449px;width:1389px;height:21px;background:#e6ebf4;border-top:1px solid #8ea7c6;border-bottom:1px solid #8ea7c6;border-right:1px solid #8ea7c6"></div>
<div class="abs" style="left:204px;top:449px;width:695px;height:21px;border:2px solid #94aacb"></div>
<div class="abs" style="left:898px;top:449px;width:1px;height:21px;background:#8ea7c6"></div>
<div class="dd" style="left:882px;top:452px;width:15px;height:15px"><svg width="13" height="13" viewBox="0 0 13 13"><path d="M3.3 5.3 L6.5 8.4 L9.7 5.3" fill="none" stroke="#3363a0" stroke-width="1.5"/></svg></div>
<div class="dd" style="left:1576px;top:452px;width:15px;height:15px"><svg width="13" height="13" viewBox="0 0 13 13"><path d="M3.3 5.3 L6.5 8.4 L9.7 5.3" fill="none" stroke="#3363a0" stroke-width="1.5"/></svg></div>
<div class="abs" style="left:208px;top:455px;width:1px;height:9px;background:#111"></div>
<div class="lbl" style="left:207px;top:432px;color:#222">Boaretto Diletta (diletta.boaretto6772)</div>
<div class="lbl" style="left:901px;top:432px;color:#222">ALTRO</div>
<div class="abs" style="left:1594px;top:429px;width:16px;height:192px;background:#f0f0f0"></div>
<svg class="abs" style="left:1597px;top:435px" width="10" height="6" viewBox="0 0 10 6"><path d="M1 5 L5 1 L9 5 Z" fill="#333"/></svg>
<svg class="abs" style="left:0;top:0" width="1653" height="621" viewBox="0 0 1653 621"><ellipse cx="222.9" cy="400.9" rx="32.8" ry="12.2" fill="none" stroke="#f81010" stroke-width="2.4"/><ellipse cx="929.8" cy="402.3" rx="43.2" ry="11.9" fill="none" stroke="#f81010" stroke-width="2.4"/><path d="M208 468.5 L871 468.5" stroke="#ee1111" stroke-width="2.2"/><path d="M904 470 L1566 468.5" stroke="#ee1111" stroke-width="2.2"/></svg>
</div></body></html>
